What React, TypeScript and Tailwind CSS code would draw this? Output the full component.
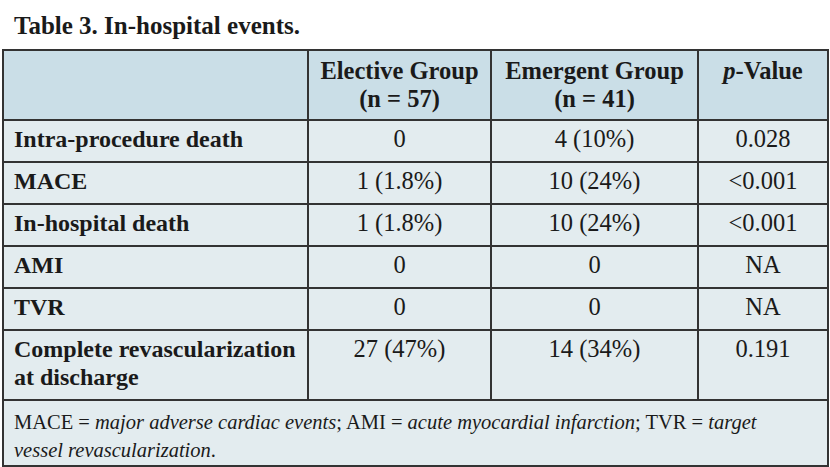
const rows: { label: string[]; elective: string; emergent: string; p: string; tall?: boolean }[] = [
  { label: ["Intra-procedure death"], elective: "0", emergent: "4 (10%)", p: "0.028" },
  { label: ["MACE"], elective: "1 (1.8%)", emergent: "10 (24%)", p: "<0.001" },
  { label: ["In-hospital death"], elective: "1 (1.8%)", emergent: "10 (24%)", p: "<0.001" },
  { label: ["AMI"], elective: "0", emergent: "0", p: "NA" },
  { label: ["TVR"], elective: "0", emergent: "0", p: "NA" },
  { label: ["Complete revascularization", "at discharge"], elective: "27 (47%)", emergent: "14 (34%)", p: "0.191", tall: true },
];

const cell = "border-2 border-[#333333] align-top";

export default function App() {
  return (
    <div className="h-[467px] w-[830px] bg-white font-['Liberation_Serif',serif] text-[#1a1a1a]">
      <div className="px-[14px] pt-[11px] text-[25px] font-bold leading-[30px]">Table 3. In-hospital events.</div>
      <table className="ml-[2px] mt-[8px] w-[825px] table-fixed border-collapse">
        <colgroup>
          <col className="w-[305px]" />
          <col className="w-[183px]" />
          <col className="w-[207px]" />
          <col className="w-[130px]" />
        </colgroup>
        <thead>
          <tr className="h-[70px] bg-[#cadee7] text-[24.5px] font-bold leading-[28px]">
            <th className={cell}></th>
            <th className={`${cell} pt-[6px] text-center`}>
              Elective Group
              <br />
              (n = 57)
            </th>
            <th className={`${cell} pt-[6px] text-center`}>
              Emergent Group
              <br />
              (n = 41)
            </th>
            <th className={`${cell} pt-[6px] text-center`}>
              <i>p</i>-Value
            </th>
          </tr>
        </thead>
        <tbody className="bg-[#e3ecef] text-[24.5px] leading-[28px]">
          {rows.map((r) => (
            <tr key={r.label[0]} className={r.tall ? "h-[70px]" : "h-[42px]"}>
              <td className={`${cell} px-[10px] pt-[4px] text-[24px] font-bold`}>
                {r.label.map((l, i) => (
                  <div key={i}>{l}</div>
                ))}
              </td>
              <td className={`${cell} pt-[4px] text-center`}>{r.elective}</td>
              <td className={`${cell} pt-[4px] text-center`}>{r.emergent}</td>
              <td className={`${cell} pt-[4px] text-center`}>{r.p}</td>
            </tr>
          ))}
          <tr className="h-[66px]">
            <td colSpan={4} className={`${cell} px-[10px] pt-[7px] text-[20.5px] leading-[28px]`}>
              MACE = <i>major adverse cardiac events</i>; AMI = <i>acute myocardial infarction</i>; TVR = <i>target</i>
              <br />
              <i>vessel revascularization</i>.
            </td>
          </tr>
        </tbody>
      </table>
    </div>
  );
}
